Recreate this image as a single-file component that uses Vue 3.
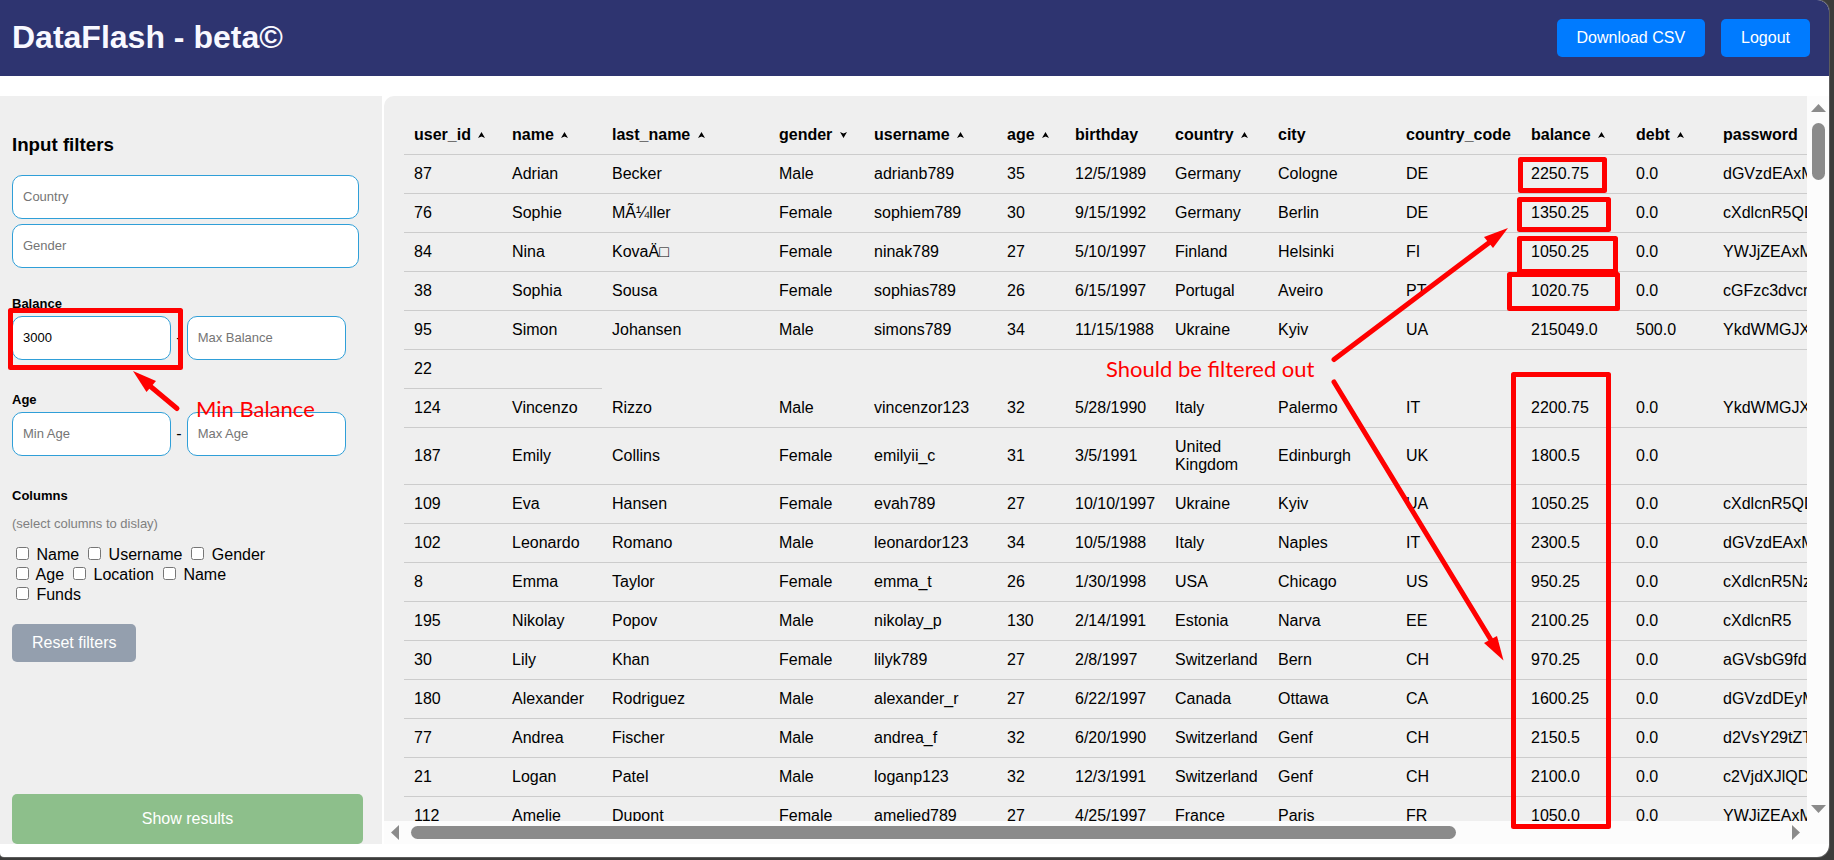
<script setup>
import { ref } from 'vue'

const minBalance = ref('3000')

const columns = [
  { key: 'user_id', sort: 'up', width: 98 },
  { key: 'name', sort: 'up', width: 100 },
  { key: 'last_name', sort: 'up', width: 167 },
  { key: 'gender', sort: 'down', width: 95 },
  { key: 'username', sort: 'up', width: 133 },
  { key: 'age', sort: 'up', width: 68 },
  { key: 'birthday', width: 100 },
  { key: 'country', sort: 'up', width: 103 },
  { key: 'city', width: 128 },
  { key: 'country_code', width: 125 },
  { key: 'balance', sort: 'up', width: 105 },
  { key: 'debt', sort: 'up', width: 87 },
  { key: 'password', width: 240 },
]

const rows = [
  ['87', 'Adrian', 'Becker', 'Male', 'adrianb789', '35', '12/5/1989', 'Germany', 'Cologne', 'DE', '2250.75', '0.0', 'dGVzdEAxM'],
  ['76', 'Sophie', 'MÃ¼ller', 'Female', 'sophiem789', '30', '9/15/1992', 'Germany', 'Berlin', 'DE', '1350.25', '0.0', 'cXdlcnR5QD'],
  ['84', 'Nina', 'KovaÄ□', 'Female', 'ninak789', '27', '5/10/1997', 'Finland', 'Helsinki', 'FI', '1050.25', '0.0', 'YWJjZEAxM'],
  ['38', 'Sophia', 'Sousa', 'Female', 'sophias789', '26', '6/15/1997', 'Portugal', 'Aveiro', 'PT', '1020.75', '0.0', 'cGFzc3dvcm'],
  ['95', 'Simon', 'Johansen', 'Male', 'simons789', '34', '11/15/1988', 'Ukraine', 'Kyiv', 'UA', '215049.0', '500.0', 'YkdWMGJX'],
  ['22', ''],
  ['124', 'Vincenzo', 'Rizzo', 'Male', 'vincenzor123', '32', '5/28/1990', 'Italy', 'Palermo', 'IT', '2200.75', '0.0', 'YkdWMGJX'],
  ['187', 'Emily', 'Collins', 'Female', 'emilyii_c', '31', '3/5/1991', 'United Kingdom', 'Edinburgh', 'UK', '1800.5', '0.0', ''],
  ['109', 'Eva', 'Hansen', 'Female', 'evah789', '27', '10/10/1997', 'Ukraine', 'Kyiv', 'UA', '1050.25', '0.0', 'cXdlcnR5QD'],
  ['102', 'Leonardo', 'Romano', 'Male', 'leonardor123', '34', '10/5/1988', 'Italy', 'Naples', 'IT', '2300.5', '0.0', 'dGVzdEAxM'],
  ['8', 'Emma', 'Taylor', 'Female', 'emma_t', '26', '1/30/1998', 'USA', 'Chicago', 'US', '950.25', '0.0', 'cXdlcnR5Nz'],
  ['195', 'Nikolay', 'Popov', 'Male', 'nikolay_p', '130', '2/14/1991', 'Estonia', 'Narva', 'EE', '2100.25', '0.0', 'cXdlcnR5'],
  ['30', 'Lily', 'Khan', 'Female', 'lilyk789', '27', '2/8/1997', 'Switzerland', 'Bern', 'CH', '970.25', '0.0', 'aGVsbG9fd2'],
  ['180', 'Alexander', 'Rodriguez', 'Male', 'alexander_r', '27', '6/22/1997', 'Canada', 'Ottawa', 'CA', '1600.25', '0.0', 'dGVzdDEyM'],
  ['77', 'Andrea', 'Fischer', 'Male', 'andrea_f', '32', '6/20/1990', 'Switzerland', 'Genf', 'CH', '2150.5', '0.0', 'd2VsY29tZT'],
  ['21', 'Logan', 'Patel', 'Male', 'loganp123', '32', '12/3/1991', 'Switzerland', 'Genf', 'CH', '2100.0', '0.0', 'c2VjdXJlQD'],
  ['112', 'Amelie', 'Dupont', 'Female', 'amelied789', '27', '4/25/1997', 'France', 'Paris', 'FR', '1050.0', '0.0', 'YWJjZEAxM'],
]

const columnOptions = ['Name', 'Username', 'Gender', 'Age', 'Location', 'Name', 'Funds']
</script>

<template>
  <div class="desktop">
    <div class="window">
      <header class="header">
        <h1>DataFlash - beta©</h1>
        <div class="actions">
          <button type="button" class="btn">Download CSV</button>
          <button type="button" class="btn">Logout</button>
        </div>
      </header>

      <div class="main">
        <form class="sidebar" @submit.prevent>
          <h3>Input filters</h3>
          <div class="stack">
            <input type="text" placeholder="Country" aria-label="Country" />
            <input type="text" placeholder="Gender" aria-label="Gender" />
          </div>

          <fieldset class="group">
            <legend>Balance</legend>
            <div class="range">
              <input v-model="minBalance" type="text" placeholder="Min Balance" aria-label="Min Balance" />
              <span>-</span>
              <input type="text" placeholder="Max Balance" aria-label="Max Balance" />
            </div>
          </fieldset>

          <fieldset class="group">
            <legend>Age</legend>
            <div class="range">
              <input type="text" placeholder="Min Age" aria-label="Min Age" />
              <span>-</span>
              <input type="text" placeholder="Max Age" aria-label="Max Age" />
            </div>
          </fieldset>

          <fieldset class="group">
            <legend>Columns</legend>
            <p class="hint">(select columns to dislay)</p>
            <div class="checks">
              <label v-for="(option, i) in columnOptions" :key="i"><input type="checkbox" /> {{ option }}</label>
            </div>
          </fieldset>

          <button type="reset" class="btn reset">Reset filters</button>
          <button type="submit" class="btn submit">Show results</button>
        </form>

        <section class="panel">
          <div class="viewport">
            <table>
              <colgroup>
                <col v-for="c in columns" :key="c.key" :style="{ width: c.width + 'px' }" />
              </colgroup>
              <thead>
                <tr>
                  <th v-for="c in columns" :key="c.key" scope="col">
                    {{ c.key }}
                    <svg v-if="c.sort" class="sort" :class="c.sort" viewBox="0 0 7 6" aria-hidden="true">
                      <path d="M3.5 0 L7 6 L3.5 4.4 L0 6 Z" />
                    </svg>
                  </th>
                </tr>
              </thead>
              <tbody>
                <tr v-for="row in rows" :key="row[0]">
                  <td v-for="(cell, i) in row" :key="i">{{ cell }}</td>
                </tr>
              </tbody>
            </table>
          </div>
          <div class="bar vertical">
            <svg viewBox="0 0 15 8" width="15" height="8"><path d="M7.5 0 L15 8 H0 Z" /></svg>
            <div class="track"><div class="thumb"></div></div>
            <svg viewBox="0 0 15 8" width="15" height="8"><path d="M0 0 H15 L7.5 8 Z" /></svg>
          </div>
          <div class="bar horizontal">
            <svg viewBox="0 0 8 15" width="8" height="15"><path d="M8 0 V15 L0 7.5 Z" /></svg>
            <div class="track"><div class="thumb"></div></div>
            <svg viewBox="0 0 8 15" width="8" height="15"><path d="M0 0 L8 7.5 L0 15 Z" /></svg>
          </div>
          <div class="bar"></div>
        </section>
      </div>
    </div>

    <svg class="notes" width="1834" height="860" viewBox="0 0 1834 860">
      <g class="boxes">
        <rect x="10.5" y="310.5" width="170" height="57" />
        <rect x="1520.5" y="159.5" width="84" height="31" />
        <rect x="1519.5" y="199.5" width="89" height="30" />
        <rect x="1519.5" y="238.5" width="96" height="33" />
        <rect x="1509.5" y="274.5" width="108" height="34" />
        <rect x="1513.5" y="374.5" width="95" height="452" />
      </g>
      <g class="shafts">
        <path d="M177 408.5 L150 386" />
        <path d="M1334 359.5 L1490 242" />
        <path d="M1334 382 L1491 640" />
      </g>
      <g class="heads">
        <path d="M133 371 L156 381 L146.5 392 Z" />
        <path d="M1508 228 L1484 237 L1493 248 Z" />
        <path d="M1503.5 660.5 L1484 643 L1497 636 Z" />
      </g>
      <text x="196" y="417">Min Balance</text>
      <text x="1106" y="377">Should be filtered out</text>
    </svg>
  </div>
</template>

<style>
body {
  margin: 0;
  background: #3c3c3b;
}
</style>

<style scoped>
* {
  box-sizing: border-box;
}
.desktop {
  position: relative;
  height: 100vh;
  padding: 0 5px 3px 0;
  overflow: hidden;
  background: #3c3c3b;
  font: 16px/18px "Liberation Sans", Arial, sans-serif;
  color: #000;
}
.window {
  display: flex;
  flex-direction: column;
  height: 100%;
  padding-bottom: 13px;
  background: #fff;
  border-radius: 0 12px 12px 4px;
  box-shadow: 0 0 0 1px #5c5c5c;
  overflow: hidden;
}
.header {
  display: flex;
  align-items: center;
  justify-content: space-between;
  height: 76px;
  flex: none;
  padding: 0 19px 0 12px;
  background: #2e3470;
}
h1 {
  margin: 0;
  padding-bottom: 2px;
  font-size: 32px;
  line-height: 36px;
  color: #f8f8ff;
}
.actions {
  display: flex;
  gap: 16px;
}
.btn {
  height: 38px;
  padding: 0 20px;
  border: 0;
  border-radius: 5px;
  background: #007bff;
  color: #fff;
  font: inherit;
}
.main {
  display: flex;
  flex: 1;
  gap: 2px;
  min-height: 0;
  margin-top: 20px;
}
.sidebar {
  display: flex;
  flex-direction: column;
  width: 382px;
  flex: none;
  padding: 38px 19px 0 12px;
  background: #efefef;
}
h3 {
  margin: 0 0 19px;
  line-height: 22px;
}
.stack {
  display: flex;
  flex-direction: column;
  gap: 5px;
  margin-right: 4px;
}
input[type="text"] {
  width: 100%;
  min-width: 0;
  height: 44px;
  padding: 0 10px 1px;
  border: 1px solid #2f9fd8;
  border-radius: 10px;
  background: #fff;
  color: #000;
  font: 13px "Liberation Sans", Arial, sans-serif;
}
input::placeholder {
  color: #757575;
}
.group {
  min-width: 0;
  margin: 28px 0 0;
  padding: 0;
  border: 0;
}
.group + .group {
  margin-top: 32px;
}
legend {
  padding: 0;
  font-size: 13px;
  font-weight: bold;
  line-height: 16px;
}
.range {
  display: flex;
  align-items: center;
  gap: 5px;
  margin: 4px 17px 0 0;
}
.hint {
  margin: 12px 0 12px;
  font-size: 13px;
  line-height: 16px;
  color: #808080;
}
.checks {
  display: flex;
  flex-wrap: wrap;
  column-gap: 5px;
  width: 270px;
  line-height: 20px;
}
.checks label {
  height: 20px;
}
.checks input {
  margin: 3px 3px 3px 4px;
}
.reset {
  align-self: flex-start;
  margin-top: 20px;
  background: #949fae;
}
.submit {
  height: 50px;
  margin-top: auto;
  background: #8dbf8b;
}
.panel {
  display: grid;
  flex: 1;
  grid-template-columns: minmax(0, 1fr) 22px;
  grid-template-rows: minmax(0, 1fr) 23px;
  border-radius: 10px 0 0 0;
  background: #efefef;
  overflow: hidden;
}
.viewport {
  padding: 20px 0 0 20px;
  overflow: hidden;
}
table {
  width: 1549px;
  table-layout: fixed;
  border-spacing: 0;
}
th,
td {
  padding: 10px;
  border-bottom: 1px solid #ccc;
  text-align: left;
}
th {
  white-space: nowrap;
}
.sort {
  width: 7px;
  height: 6px;
  margin: 0 0 2px 3px;
}
.sort.down {
  transform: rotate(180deg);
}
.bar {
  display: flex;
  align-items: center;
  background: #fcfcfc;
  fill: #8b8b8b;
}
.vertical {
  flex-direction: column;
  padding: 8px 0;
}
.horizontal {
  padding: 0 7px;
}
.bar svg {
  flex: none;
}
.track {
  flex: 1;
}
.thumb {
  border-radius: 7px;
  background: #8b8b8b;
}
.vertical .thumb {
  width: 13px;
  height: 57px;
  margin-top: 11px;
}
.horizontal .thumb {
  width: 75%;
  height: 13px;
  margin-left: 12px;
}
.notes {
  position: absolute;
  top: 0;
  left: 0;
  pointer-events: none;
}
.boxes,
.shafts {
  fill: none;
  stroke: #f00;
  stroke-width: 5px;
  stroke-linecap: round;
  stroke-linejoin: round;
}
.heads {
  fill: #f00;
}
.notes text {
  fill: #f00;
  font-family: Lato, "Open Sans", sans-serif;
  font-size: 22px;
}
</style>
